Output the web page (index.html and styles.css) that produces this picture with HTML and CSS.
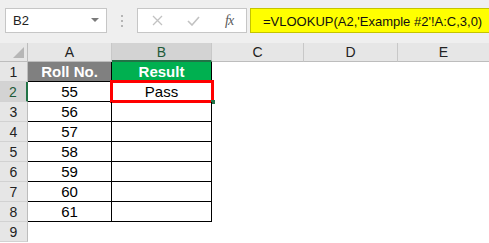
FILE: index.html
```html
<!DOCTYPE html>
<html lang="en">
<head>
  <meta charset="UTF-8">
  <title>VLOOKUP - Example #2</title>
  <link rel="stylesheet" href="styles.css">
</head>
<body>
  <div class="barra">
    <div class="namebox">
      <span>B2</span>
      <i class="seta"></i>
    </div>
    <div class="pontos"><b></b><b></b><b></b></div>
    <div class="botoes">
      <svg width="11" height="11" viewBox="0 0 11 11"><path d="M1 1 L10 10 M10 1 L1 10" stroke="#c2c2c2" stroke-width="1.3" fill="none"/></svg>
      <svg width="13" height="10" viewBox="0 0 13 10"><path d="M1 5 L5 9 L12 1" stroke="#c2c2c2" stroke-width="1.6" fill="none"/></svg>
      <span class="fx">fx</span>
    </div>
    <div class="formula">=VLOOKUP(A2,'Example #2'!A:C,3,0)</div>
  </div>

  <div class="folha">
    <div class="canto"><i></i></div>
    <div class="col">A</div>
    <div class="col sel">B</div>
    <div class="col">C</div>
    <div class="col">D</div>
    <div class="col ultima">E</div>

    <div class="lin">1</div>
    <div class="cel titulo cinza">Roll No.</div>
    <div class="cel titulo verde">Result</div>
    <div class="vazio"></div><div class="vazio"></div><div class="vazio"></div>

    <div class="lin sel">2</div>
    <div class="cel">55</div>
    <div class="cel ativa">Pass<span class="moldura"><i></i></span></div>
    <div class="vazio"></div><div class="vazio"></div><div class="vazio"></div>

    <div class="lin">3</div>
    <div class="cel">56</div>
    <div class="cel"></div>
    <div class="vazio"></div><div class="vazio"></div><div class="vazio"></div>

    <div class="lin">4</div>
    <div class="cel">57</div>
    <div class="cel"></div>
    <div class="vazio"></div><div class="vazio"></div><div class="vazio"></div>

    <div class="lin">5</div>
    <div class="cel">58</div>
    <div class="cel"></div>
    <div class="vazio"></div><div class="vazio"></div><div class="vazio"></div>

    <div class="lin">6</div>
    <div class="cel">59</div>
    <div class="cel"></div>
    <div class="vazio"></div><div class="vazio"></div><div class="vazio"></div>

    <div class="lin">7</div>
    <div class="cel">60</div>
    <div class="cel"></div>
    <div class="vazio"></div><div class="vazio"></div><div class="vazio"></div>

    <div class="lin">8</div>
    <div class="cel">61</div>
    <div class="cel"></div>
    <div class="vazio"></div><div class="vazio"></div><div class="vazio"></div>

    <div class="lin">9</div>
    <div class="vazio"></div><div class="vazio"></div>
    <div class="vazio"></div><div class="vazio"></div><div class="vazio"></div>
  </div>
</body>
</html>
```

FILE: styles.css
```css
body {
  margin: 0;
  font-family: 'Liberation Sans', Arial, sans-serif;
  background-color: #fff;
  color: #000;
  overflow: hidden;
}

/* barra da fórmula */
.barra {
  height: 43px;
  box-sizing: border-box;
  padding: 8px 0 0 5px;
  background-color: #efefef;
  display: flex;
  align-items: flex-start;
}

.namebox {
  width: 102px;
  height: 25px;
  box-sizing: border-box;
  background-color: white;
  border: 1px solid #c6c6c6;
  display: flex;
  align-items: center;
  justify-content: space-between;
  padding: 0 7px 0 7px;
  font-size: 13px;
  color: #222;
}

.seta {
  width: 0;
  height: 0;
  border-left: 4px solid transparent;
  border-right: 4px solid transparent;
  border-top: 4px solid #7a7a7a;
  margin-top: -2px;
}

.pontos {
  width: 30px;
  height: 25px;
  display: flex;
  flex-direction: column;
  align-items: center;
  justify-content: center;
  gap: 3px;
}

.pontos b {
  width: 2px;
  height: 2px;
  background-color: #b5b5b5;
}

.botoes {
  width: 110px;
  height: 25px;
  box-sizing: border-box;
  background-color: white;
  border: 1px solid #c6c6c6;
  display: flex;
  align-items: center;
  padding-left: 14px;
  gap: 24px;
}

.fx {
  font-family: 'Liberation Serif', serif;
  font-style: italic;
  font-size: 14px;
  color: #5a5a5a;
  margin-left: 1px;
  letter-spacing: -1px;
}

.formula {
  flex: 1;
  height: 25px;
  box-sizing: border-box;
  margin-left: 3px;
  background-color: #ffff00;
  border: 1px solid #c4c400;
  border-right: none;
  padding-left: 12px;
  font-size: 13px;
  line-height: 25px;
  color: #111;
  white-space: nowrap;
}

/* grelha */
.folha {
  display: grid;
  grid-template-columns: 28px 84px 100px 92px 94px 1fr;
  grid-template-rows: 19px repeat(9, 20px);
}

.canto {
  background-color: #e6e6e6;
  border-right: 1px solid #bdbdbd;
  border-bottom: 1px solid #bdbdbd;
  position: relative;
}

.canto i {
  position: absolute;
  right: 3px;
  bottom: 3px;
  width: 0;
  height: 0;
  border-left: 11px solid transparent;
  border-bottom: 11px solid #b6b6b6;
}

.col {
  background-color: #e6e6e6;
  border-right: 1px solid #c8c8c8;
  border-bottom: 1px solid #bdbdbd;
  font-size: 14px;
  color: #222;
  display: flex;
  align-items: center;
  justify-content: center;
}

.col.ultima {
  border-right: none;
}

.col.sel {
  background-color: #d3d3d3;
  border-bottom: 2px solid #217346;
  color: #1e5a38;
}

.lin {
  background-color: #e6e6e6;
  border-right: 1px solid #bdbdbd;
  border-bottom: 1px solid #d2d2d2;
  font-size: 14px;
  color: #222;
  display: flex;
  align-items: center;
  justify-content: center;
}

.lin.sel {
  background-color: #d3d3d3;
  border-right: 2px solid #217346;
  color: #1e5a38;
}

.cel {
  border-right: 1px solid #000;
  border-bottom: 1px solid #000;
  font-size: 15px;
  display: flex;
  align-items: center;
  justify-content: center;
  position: relative;
}

.titulo {
  color: white;
  font-weight: bold;
}

.cinza {
  background-color: #808080;
}

.verde {
  background-color: #00b050;
}

.moldura {
  position: absolute;
  top: -2px;
  left: -2px;
  right: -3px;
  bottom: -2px;
  border: 3px solid #ff0000;
}

.moldura i {
  position: absolute;
  right: -4px;
  bottom: -4px;
  width: 4px;
  height: 4px;
  background-color: #217346;
}
```
